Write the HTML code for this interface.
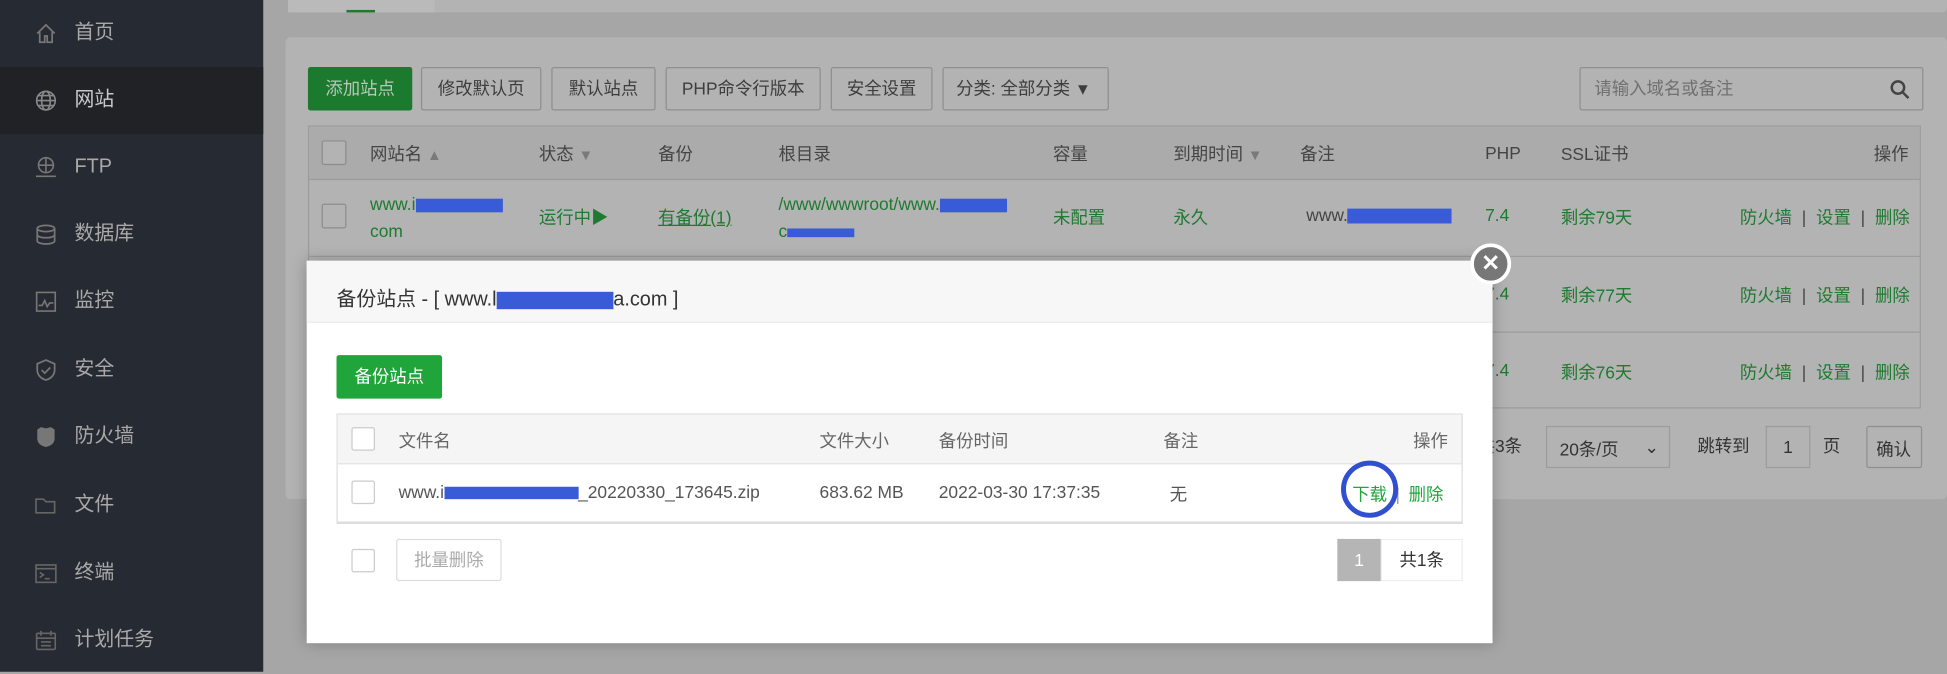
<!DOCTYPE html>
<html><head><meta charset="utf-8"><style>
*{box-sizing:border-box;margin:0;padding:0}
html,body{width:1947px;height:672px;overflow:hidden;background:#a6a6a6}
body{font-family:"Liberation Sans","Noto Sans CJK SC",sans-serif;font-size:14px;color:#444}
#w{position:absolute;left:0;top:0;width:1568px;height:541px;transform:scale(1.24171);transform-origin:0 0;background:#a6a6a6}
.a{position:absolute}
.side{left:0;top:0;width:212px;height:541px;background:#262a32}
.si{position:absolute;left:0;width:212px;height:54px;color:#a9a9a9;font-size:16px;line-height:54px;padding-left:60px}
.si.act{background:#202226;color:#c8c8c8}
.si svg{position:absolute;left:28px;top:18px}
.btn{position:absolute;top:54px;height:35px;line-height:33px;border:1px solid #8f8f8f;border-radius:2px;background:#b3b3b3;color:#3d3d3d;text-align:center;font-size:14px}
.g{color:#1d7a2f}
.hd{color:#444}
.t{position:absolute;white-space:nowrap}
.cb{position:absolute;width:20px;height:20px;border:1px solid #8d8d8d;border-radius:2px;background:#b3b3b3}
.cbw{position:absolute;width:19px;height:19px;border:1px solid #ccc;border-radius:2px;background:#fff}
.red{position:absolute;background:#3a5bd8}
.r{display:inline-block;background:#3a5bd8;vertical-align:middle}
.hl{position:absolute;left:249px;width:1298px;height:1px;background:#9c9c9c}
.ar{color:#7a7a7a;font-size:12px}
.ops{position:absolute;right:30px;white-space:nowrap;word-spacing:4px}
</style></head><body><div id="w">
<div class="a side">
 <div class="si" style="top:0">首页<svg width="18" height="18" viewBox="0 0 18 18" fill="none" stroke="#777" stroke-width="1.4"><path d="M2 9L9 2l7 7M4 8v8h4v-5h2v5h4V8"/></svg></div>
 <div class="si act" style="top:54px">网站<svg width="18" height="18" viewBox="0 0 18 18" fill="none" stroke="#888" stroke-width="1.3"><circle cx="9" cy="9" r="7.5"/><ellipse cx="9" cy="9" rx="3.5" ry="7.5"/><path d="M1.5 9h15M3 5h12M3 13h12"/></svg></div>
 <div class="si" style="top:108px">FTP<svg width="18" height="18" viewBox="0 0 18 18" fill="none" stroke="#777" stroke-width="1.3"><circle cx="9" cy="7" r="6"/><path d="M3 7h12M9 1v12M1 16h16"/></svg></div>
 <div class="si" style="top:162px">数据库<svg width="18" height="18" viewBox="0 0 18 18" fill="none" stroke="#777" stroke-width="1.4"><ellipse cx="9" cy="4" rx="7" ry="2.5"/><path d="M2 4v10c0 1.4 3 2.5 7 2.5s7-1.1 7-2.5V4M2 9c0 1.4 3 2.5 7 2.5S16 10.4 16 9"/></svg></div>
 <div class="si" style="top:216px">监控<svg width="18" height="18" viewBox="0 0 18 18" fill="none" stroke="#777" stroke-width="1.3"><rect x="1.5" y="1.5" width="15" height="15"/><path d="M3 12h3l2-4 2 5 2-3h3"/></svg></div>
 <div class="si" style="top:271px">安全<svg width="18" height="18" viewBox="0 0 18 18" fill="none" stroke="#777" stroke-width="1.4"><path d="M9 1l7 3v5c0 4-3 7-7 8-4-1-7-4-7-8V4z"/><path d="M5.5 9l2.5 2.5 4.5-4.5"/></svg></div>
 <div class="si" style="top:325px">防火墙<svg width="18" height="18" viewBox="0 0 18 18"><path d="M2 3l3-2 4 1 4-1 3 2v7c0 4-3 6-7 7-4-1-7-3-7-7z" fill="#777"/></svg></div>
 <div class="si" style="top:380px">文件<svg width="18" height="18" viewBox="0 0 18 18" fill="none" stroke="#666" stroke-width="1.3"><path d="M1 4h6l2 2h7v9H1z"/></svg></div>
 <div class="si" style="top:435px">终端<svg width="18" height="18" viewBox="0 0 18 18" fill="none" stroke="#666" stroke-width="1.3"><rect x="1" y="2" width="16" height="14"/><path d="M4 8l3 2-3 2M8 13h4M1 5h16"/></svg></div>
 <div class="si" style="top:489px">计划任务<svg width="18" height="18" viewBox="0 0 18 18" fill="none" stroke="#666" stroke-width="1.3"><rect x="1.5" y="3" width="15" height="13" rx="1"/><path d="M1.5 7h15M5 1v4M13 1v4M5 10h8M5 13h8"/></svg></div>
</div>

<div class="a" style="left:232px;top:-5px;width:1336px;height:15px;background:#b3b3b3;border-radius:4px"></div>
<div class="a" style="left:232px;top:-5px;width:118px;height:15px;background:#bababa"></div>
<div class="a" style="left:279px;top:8px;width:23px;height:2px;background:#1d7a2f"></div>

<div class="a" style="left:230px;top:30px;width:1338px;height:372px;background:#b3b3b3;border-radius:4px"></div>
<div class="btn" style="left:248px;width:84px;background:#1b7a2e;border-color:#1b7a2e;color:#b8c8bb">添加站点</div>
<div class="btn" style="left:339px;width:97px">修改默认页</div>
<div class="btn" style="left:444px;width:84px">默认站点</div>
<div class="btn" style="left:536px;width:125px">PHP命令行版本</div>
<div class="btn" style="left:669px;width:82px">安全设置</div>
<div class="btn" style="left:759px;width:134px;text-align:left;padding-left:10px">分类: 全部分类 <span style="font-size:13px">▼</span></div>
<div class="btn" style="left:1272px;width:277px;text-align:left;padding-left:11px;color:#707070">请输入域名或备注<svg style="position:absolute;right:10px;top:9px" width="16" height="16" viewBox="0 0 16 16" fill="none" stroke="#444" stroke-width="2"><circle cx="6.5" cy="6.5" r="5"/><path d="M10 10l5 5"/></svg></div>

<div class="a" style="left:248px;top:101px;width:1299px;height:228px;border:1px solid #9c9c9c;background:#b3b3b3"></div>
<div class="a" style="left:249px;top:102px;width:1297px;height:42px;background:#ababab"></div>
<div class="hl" style="top:144px"></div><div class="hl" style="top:206px"></div><div class="hl" style="top:267px"></div>
<div class="cb" style="left:259px;top:113px"></div>
<div class="cb" style="left:259px;top:164px"></div><div class="cb" style="left:259px;top:226px"></div><div class="cb" style="left:259px;top:288px"></div>
<div class="t hd" style="left:298px;top:114px">网站名 <span class="ar">▲</span></div>
<div class="t hd" style="left:434px;top:114px">状态 <span class="ar">▼</span></div>
<div class="t hd" style="left:530px;top:114px">备份</div>
<div class="t hd" style="left:627px;top:114px">根目录</div>
<div class="t hd" style="left:848px;top:114px">容量</div>
<div class="t hd" style="left:945px;top:114px">到期时间 <span class="ar">▼</span></div>
<div class="t hd" style="left:1047px;top:114px">备注</div>
<div class="t hd" style="left:1196px;top:115px">PHP</div>
<div class="t hd" style="left:1257px;top:114px">SSL证书</div>
<div class="t hd" style="left:1509px;top:114px">操作</div>

<div class="t g" style="left:298px;top:153px;line-height:22px">www.i<span class="r" style="width:70px;height:11px"></span><br>com</div>
<div class="t g" style="left:434px;top:165px">运行中▶</div>
<div class="t g" style="left:530px;top:165px;text-decoration:underline">有备份(1)</div>
<div class="t g" style="left:627px;top:153px;line-height:22px">/www/wwwroot/www.<span class="r" style="width:54px;height:11px"></span><br>c<span class="r" style="width:54px;height:7px"></span></div>
<div class="t g" style="left:848px;top:165px">未配置</div>
<div class="t g" style="left:945px;top:165px">永久</div>
<div class="t" style="left:1052px;top:165px;color:#444">www.<span class="r" style="width:84px;height:12px"></span></div>
<div class="t g" style="left:1196px;top:165px">7.4</div>
<div class="t g" style="left:1257px;top:165px">剩余79天</div>
<div class="g ops" style="top:165px">防火墙 <span style="color:#444">|</span> 设置 <span style="color:#444">|</span> 删除</div>
<div class="t g" style="left:1196px;top:228px">7.4</div><div class="t g" style="left:1257px;top:228px">剩余77天</div><div class="g ops" style="top:228px">防火墙 <span style="color:#444">|</span> 设置 <span style="color:#444">|</span> 删除</div>
<div class="t g" style="left:1196px;top:290px">7.4</div><div class="t g" style="left:1257px;top:290px">剩余76天</div><div class="g ops" style="top:290px">防火墙 <span style="color:#444">|</span> 设置 <span style="color:#444">|</span> 删除</div>

<div class="t" style="left:1190px;top:349px;color:#333">共3条</div>
<div class="a" style="left:1245px;top:343px;width:100px;height:34px;border:1px solid #9c9c9c;padding:8px 10px;color:#333">20条/页 <span style="position:absolute;right:8px">⌄</span></div>
<div class="t" style="left:1367px;top:349px;color:#333">跳转到</div>
<div class="a" style="left:1422px;top:343px;width:36px;height:34px;border:1px solid #9c9c9c;padding:8px 13px;color:#333">1</div>
<div class="t" style="left:1468px;top:349px;color:#333">页</div>
<div class="a" style="left:1503px;top:343px;width:45px;height:34px;border:1px solid #8f8f8f;border-radius:2px;padding:8px 7px;color:#333">确认</div>

<!-- modal -->
<div class="a" style="left:247px;top:210px;width:955px;height:308px;background:#fff;box-shadow:0 0 12px rgba(0,0,0,.25)"></div>
<div class="a" style="left:247px;top:210px;width:955px;height:50px;background:#f7f7f7;border-bottom:1px solid #ececec"></div>
<div class="t" style="left:271px;top:227px;font-size:16px;color:#333">备份站点 - [ www.l<span class="r" style="width:94px;height:14px"></span>a.com ]</div>
<div class="a" style="left:1184px;top:196px;width:33px;height:33px;border-radius:50%;background:#777;border:3px solid #fff;color:#fff;text-align:center;line-height:26px;font-size:18px;font-weight:bold">✕</div>

<div class="a" style="left:271px;top:286px;width:85px;height:35px;background:#20a53a;border-radius:2px;color:#fff;text-align:center;line-height:35px">备份站点</div>
<div class="a" style="left:271px;top:333px;width:907px;height:89px;border:1px solid #ddd;border-bottom:2px solid #ddd"></div>
<div class="a" style="left:272px;top:334px;width:905px;height:40px;background:#f5f5f5;border-bottom:1px solid #e3e3e3"></div>
<div class="cbw" style="left:283px;top:344px"></div><div class="cbw" style="left:283px;top:387px"></div><div class="cbw" style="left:283px;top:442px"></div>
<div class="t" style="left:321px;top:345px;color:#666">文件名</div>
<div class="t" style="left:660px;top:345px;color:#666">文件大小</div>
<div class="t" style="left:756px;top:345px;color:#666">备份时间</div>
<div class="t" style="left:937px;top:345px;color:#666">备注</div>
<div class="t" style="left:1138px;top:345px;color:#666">操作</div>
<div class="t" style="left:321px;top:388px;color:#555">www.i<span class="r" style="width:108px;height:10px"></span>_20220330_173645.zip</div>
<div class="t" style="left:660px;top:388px;color:#555">683.62 MB</div>
<div class="t" style="left:756px;top:388px;color:#555">2022-03-30 17:37:35</div>
<div class="t" style="left:942px;top:388px;color:#555">无</div>
<div class="t" style="left:1089px;top:388px;color:#20a53a;word-spacing:3px">下载 <span style="color:#999">|</span> 删除</div>
<div class="a" style="left:1080px;top:371px;width:46px;height:46px;border:4px solid #3050d0;border-radius:50%"></div>
<div class="a" style="left:319px;top:434px;width:85px;height:34px;border:1px solid #ddd;border-radius:2px;color:#aaa;text-align:center;line-height:32px">批量删除</div>
<div class="a" style="left:1077px;top:434px;width:35px;height:34px;background:#b5b5b5;color:#fff;text-align:center;line-height:34px">1</div>
<div class="a" style="left:1112px;top:434px;width:66px;height:34px;border:1px solid #eee;color:#333;text-align:center;line-height:32px">共1条</div>
</div></body></html>
